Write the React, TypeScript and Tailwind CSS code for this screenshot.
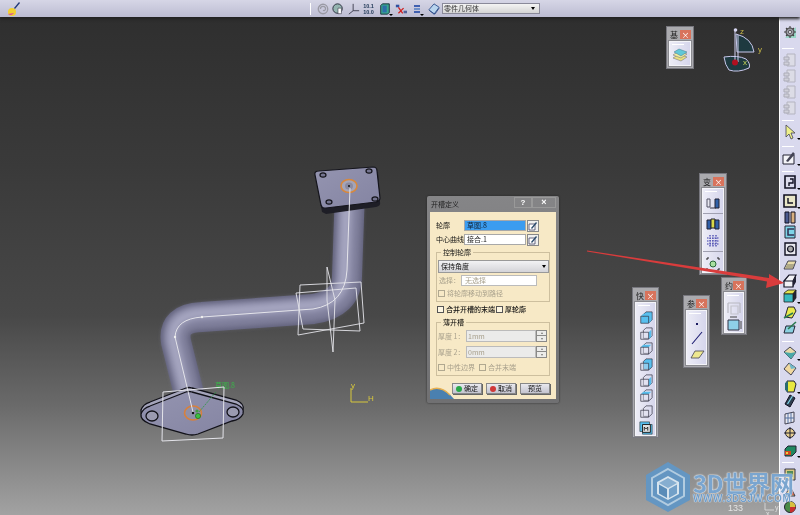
import type { ReactNode } from "react"

const cjk = "font-['Noto_Sans_CJK_SC','Liberation_Sans',sans-serif]"

function Glyph({ children, drop }: { children: ReactNode; drop?: boolean }) {
  return (
    <div className="relative h-4 w-4 shrink-0">
      <svg viewBox="0 0 16 16" className="h-4 w-4">
        {children}
      </svg>
      {drop && <div className="absolute -right-[3px] bottom-0 h-0 w-0 border-x-[2px] border-t-[2px] border-x-transparent border-t-black" />}
    </div>
  )
}

function Sep() {
  return <div className="my-[3px] ml-0.5 h-px w-3 self-start bg-white" />
}

function Faded() {
  return (
    <Glyph>
      <path d="M5 2h8v12H5z" fill="#dcdce6" stroke="#b4b4c0" />
      <path d="M2 5h5v3H2zM2 10h5v3H2z" fill="#d0d0da" stroke="#acacb8" />
    </Glyph>
  )
}

function Box({ top, side, front, drop }: { top: string; side: string; front: string; drop?: boolean }) {
  return (
    <Glyph drop={drop}>
      <path d="M2 5l4-3h8l-3 4H2z" fill={top} stroke="#222" strokeWidth="0.8" />
      <path d="M11 6l3-4v8l-3 4z" fill={side} stroke="#222" strokeWidth="0.8" />
      <path d="M2 6h9v8H2z" fill={front} stroke="#222" strokeWidth="0.8" />
    </Glyph>
  )
}

function RightToolbar() {
  return (
    <aside className="flex w-[21px] shrink-0 flex-col items-center border-l border-white bg-[#d9d9ee] pt-[7px]">
      <Glyph>
        <path d="M3 14L14 3v11z" fill="#9ad8c8" />
        <circle cx="8" cy="8" r="4" fill="#9a9aa4" stroke="#444" strokeWidth="1.1" />
        <circle cx="8" cy="8" r="1.6" fill="#e6e6ee" stroke="#444" strokeWidth="0.8" />
        <path d="M8 2v2M8 12v2M2 8h2M12 8h2M4 4l1.500 1.500M10.500 10.500L12 12M12 4l-1.500 1.500M4 12l1.500-1.500" stroke="#444" strokeWidth="1.1" />
      </Glyph>
      <div className="h-[5px]" />
      <Sep />
      <Faded />
      <Faded />
      <Faded />
      <Faded />
      <div className="h-px" />
      <Sep />
      <Glyph drop>
        <path d="M4 1l9 8H9l2 5-2 1-2-5-3 3z" fill="#eef08a" stroke="#445" strokeWidth="0.8" />
      </Glyph>
      <div className="h-[3px]" />
      <Sep />
      <Glyph drop>
        <path d="M1 5h11v9H1z" fill="#f4f4f8" stroke="#223" />
        <path d="M4 11l7-9 2 2-7 8z" fill="#445" />
      </Glyph>
      <div className="h-[2px]" />
      <Sep />
      <Glyph drop>
        <path d="M3 2h10v12H3z" fill="#dcdcec" stroke="#112" strokeWidth="1.6" />
        <path d="M8 5h3v4H7v3" fill="none" stroke="#112" strokeWidth="1.4" />
      </Glyph>
      <div className="h-[3px]" />
      <Glyph drop>
        <path d="M2 2h12v12H2z" fill="#e8e6c8" stroke="#112" strokeWidth="1.6" />
        <path d="M6 5v5h5" fill="none" stroke="#112" strokeWidth="1.4" />
      </Glyph>
      <Glyph>
        <path d="M3 3h4v11H3z" fill="#4a5a90" stroke="#112" />
        <path d="M9 3h4v11H9z" fill="#d8b080" stroke="#112" />
      </Glyph>
      <div className="-mt-px" />
      <Glyph>
        <path d="M3 2h10v12H3z" fill="#7ed4e8" stroke="#223" />
        <path d="M12 5H6v6h6" fill="none" stroke="#335" strokeWidth="1.6" />
      </Glyph>
      <div className="h-px" />
      <Glyph>
        <path d="M3 2h11v12H3z" fill="#e8e8ee" stroke="#112" strokeWidth="1.4" />
        <circle cx="8.500" cy="8" r="3" fill="#aaa" stroke="#112" strokeWidth="1.2" />
      </Glyph>
      <Glyph>
        <path d="M2 12l4-8h8l-3 8z" fill="#e8dca8" stroke="#445" />
        <path d="M5 8h7M4 10h7" stroke="#776" />
      </Glyph>
      <Glyph>
        <path d="M2 8l5-6h7l-3 6zM2 8h9v6H2z" fill="#f2f2f6" stroke="#112" strokeWidth="1.2" />
        <path d="M11 8l3-6v7l-3 5z" fill="#223" />
      </Glyph>
      <div className="-mt-px" />
      <Box top="#e2e24c" side="#223" front="#38b8c0" drop />
      <Glyph>
        <path d="M3 13l3-10h6l2 4-4 7z" fill="#e8e84c" stroke="#223" />
        <path d="M2 14l9-5" stroke="#2a7a50" strokeWidth="1.6" />
      </Glyph>
      <Glyph>
        <path d="M2 13l2-7h9l-2 7z" fill="#8ad0e0" stroke="#223" />
        <path d="M6 9l8-7" stroke="#2a7a50" strokeWidth="1.6" />
      </Glyph>
      <div className="h-[2px]" />
      <Sep />
      <Glyph drop>
        <path d="M2 7l6-5 6 5-5 7z" fill="#e8d8a8" stroke="#445" />
        <path d="M2 7l7 1 5-1-5 7z" fill="#4aa8a8" />
      </Glyph>
      <Glyph>
        <path d="M2 8l5-6 7 5-5 7z" fill="#f0d8a0" stroke="#445" />
        <path d="M7 2l7 5-5 1z" fill="#70b8c8" />
      </Glyph>
      <div className="h-px" />
      <Glyph drop>
        <path d="M5 3h7l2 3-2 8H5z" fill="#e8e840" stroke="#223" />
        <path d="M3 5l3-2v11l-3-2z" fill="#2a6a70" />
      </Glyph>
      <div className="-mt-px" />
      <Glyph>
        <path d="M3 11l5-9 5 3-5 9z" fill="#2e3e50" stroke="#112" />
        <path d="M5.500 11l5-8" stroke="#7ed4e8" strokeWidth="1.2" />
      </Glyph>
      <div className="h-px" />
      <Glyph>
        <path d="M3 4l9-2v10l-9 2z" fill="#e8e8f0" stroke="#445" />
        <path d="M6 3v10M9 3v9M3 8h9" stroke="#5570a0" />
      </Glyph>
      <div className="-mt-px" />
      <Glyph>
        <circle cx="8" cy="8" r="4.500" fill="#e8d090" stroke="#223" />
        <path d="M8 2v12M2 8h12" stroke="#223" />
      </Glyph>
      <div className="h-px" />
      <Glyph drop>
        <path d="M3 7l3-3h8v6l-4 4H3z" fill="#208860" stroke="#223" />
        <path d="M3 9h6v4H3z" fill="#d04820" />
        <path d="M4 10h2v2H4z" fill="#e8d040" />
      </Glyph>
      <div className="h-px" />
      <Sep />
      <Glyph>
        <path d="M3 3h10v11H3z" fill="#d8c880" stroke="#334" />
        <path d="M5 5h6v6H5z" fill="#508858" />
      </Glyph>
      <div className="h-px" />
      <Glyph>
        <path d="M3 13L8 3l5 10z" fill="#d8c080" stroke="#334" />
        <path d="M6 12h6l-2-5z" fill="#c84830" />
      </Glyph>
      <Glyph>
        <circle cx="8" cy="8" r="5.500" fill="#4a8a48" stroke="#223" />
        <path d="M8 8V2.500A5.500 5.500 0 0113.500 8z" fill="#d8c040" />
        <path d="M8 8h5.500A5.500 5.500 0 018 13.500z" fill="#c83030" />
      </Glyph>
    </aside>
  )
}

function TopBar() {
  return (
    <header className="relative z-10 flex h-[17px] shrink-0 items-center bg-[linear-gradient(#d6d6e6,#bcbcd2)] shadow-[0_2px_3px_#222]">
      <div className="ml-[5px] w-4">
        <svg viewBox="0 0 16 16" className="h-4 w-4">
          <circle cx="7" cy="11" r="4" fill="#f2d030" />
          <path d="M3 13a4 4 0 006-1z" fill="#e0509a" />
          <path d="M9 7l5-6 1 1-5 6z" fill="#223a78" />
        </svg>
      </div>
      <div className="ml-[289px] h-3 w-px bg-white" />
      <svg viewBox="0 0 14 14" className="ml-[6px] h-3 w-3">
        <circle cx="7" cy="7" r="5.500" fill="none" stroke="#9a9aa4" strokeWidth="1.6" />
        <path d="M4 7a3 3 0 016 0 2 2 0 01-3 1.500" fill="none" stroke="#9a9aa4" strokeWidth="1.4" />
      </svg>
      <svg viewBox="0 0 14 14" className="ml-[3px] h-3 w-3">
        <circle cx="6.500" cy="6.500" r="5.500" fill="#94b4b0" stroke="#223" />
        <path d="M7 6h4v6.500H7z" fill="#fff" stroke="#223" strokeWidth="0.6" />
      </svg>
      <svg viewBox="0 0 14 14" className="ml-[4px] h-3 w-3">
        <path d="M6 1v8M6 9H13M6 9L1 13" fill="none" stroke="#334" />
      </svg>
      <div className="ml-[3px] w-[11px] text-center font-['Liberation_Sans',sans-serif] text-[5.500px] font-bold leading-[6px] text-[#223a58]">
        10.1
        <br />
        10.0
      </div>
      <div className="relative ml-[5px] w-3">
        <svg viewBox="0 0 14 14" className="h-3 w-3">
          <path d="M2 3l2-2h8v10l-2 2H2z" fill="#3aa890" stroke="#123" />
          <path d="M4 3h5v8H4z" fill="#2c6ea8" />
        </svg>
        <div className="absolute -right-[2px] -bottom-px h-0 w-0 border-x-[2px] border-t-[2px] border-x-transparent border-t-black" />
      </div>
      <svg viewBox="0 0 14 14" className="ml-[4px] h-3 w-3">
        <path d="M1 2h4v3H1z" fill="#3050a0" />
        <path d="M4 5l5 7M4 12l6-6" stroke="#d02020" strokeWidth="1.500" />
        <path d="M10 9h4v3h-4z" fill="#506098" />
      </svg>
      <div className="relative ml-[6px] flex w-2 flex-col items-center gap-px">
        <div className="h-[2px] w-[6px] bg-[#4060b0]" />
        <div className="h-[2px] w-[6px] bg-[#7090c8]" />
        <div className="h-[2px] w-[6px] bg-[#4060b0]" />
        <div className="absolute -right-[3px] -bottom-[3px] h-0 w-0 border-x-[2px] border-t-[2px] border-x-transparent border-t-black" />
      </div>
      <svg viewBox="0 0 14 14" className="ml-[7px] h-3 w-3">
        <path d="M1 8l6-7 6 4-6 8z" fill="#b8d4ee" stroke="#2a4a88" />
        <path d="M2 9l6 4 5-7" fill="none" stroke="#2a4a88" />
      </svg>
      <div className={`ml-[2px] flex h-[11px] w-[98px] items-center justify-between border border-[#8a8a9a] bg-[linear-gradient(#f4f4f4,#d4d4d4)] pl-[1px] pr-1 text-[7px] leading-none text-[#333] ${cjk}`}>
        <span>零件几何体</span>
        <div className="h-0 w-0 border-x-[2px] border-t-[3px] border-x-transparent border-t-black" />
      </div>
    </header>
  )
}

function Model() {
  const pipe = "M191 402 L176 342 Q172 318 202 317 L313 309 Q347 304 347 276 L350 190"
  const highlight = "M188 402 L173 342 Q170 315 202 313 L313 305 Q343 301 344 276 L347 190"
  const lobes = "M192 392 L236 404 Q245 408 243 414 Q240 420 232 421 L198 434 Q192 436 186 434 L150 424 Q140 420 141 414 Q143 408 150 406 L186 392 Q189 391 192 392 Z"
  return (
    <svg viewBox="0 0 800 515" className="absolute inset-0 h-[515px] w-[800px]">
      <defs>
        <linearGradient id="fl" x1="0" y1="0" x2="1" y2="1">
          <stop offset="0" stopColor="#9494b0" />
          <stop offset="1" stopColor="#8484a2" />
        </linearGradient>
        <filter id="soft" x="-10%" y="-10%" width="120%" height="120%">
          <feGaussianBlur stdDeviation="2.500" />
        </filter>
      </defs>

      {/* pipe, layered strokes for the tube shading */}
      <g fill="none">
        <path d={pipe} stroke="#62627c" strokeWidth="30" />
        <g filter="url(#soft)">
          <path d={pipe} stroke="#7e7e9a" strokeWidth="25" />
          <path d={highlight} stroke="#9292ae" strokeWidth="16" />
          <path d={highlight} stroke="#a8a8c2" strokeWidth="6" />
        </g>
      </g>

      {/* top flange */}
      <path d="M316 178 L322 212 L326 214 L376 207 Q381 206 380 202 L378 172 Z" fill="#1e1e26" />
      <path d="M315 175 Q314 171 319 171 L373 167 Q377 167 377 171 L380 198 Q380 201 376 202 L326 208 Q322 209 321 205 Z" fill="url(#fl)" stroke="#15151c" strokeWidth="1.2" />
      <g fill="#75758f" stroke="#15151c" strokeWidth="1.2">
        <ellipse cx="323" cy="175" rx="3" ry="2.200" />
        <ellipse cx="369" cy="171" rx="3" ry="2.200" />
        <ellipse cx="329" cy="202" rx="3" ry="2.200" />
        <ellipse cx="375" cy="199" rx="3" ry="2.200" />
      </g>
      <ellipse cx="349" cy="186" rx="8" ry="6.500" fill="#a4a4b8" stroke="#d8883c" strokeWidth="1.600" />
      <ellipse cx="349" cy="186" rx="4" ry="3.500" fill="#8a8aa0" />
      <circle cx="349" cy="186" r="1" fill="#111" />

      {/* bottom flange */}
      <path d={lobes} transform="translate(0 -4)" fill="#a4a4ba" stroke="#111118" strokeWidth="1.300" />
      <path d={lobes} fill="url(#fl)" stroke="#111118" strokeWidth="1.300" />
      <ellipse cx="152" cy="416" rx="6" ry="5" fill="#9a9ab0" stroke="#111118" strokeWidth="1.300" />
      <ellipse cx="233" cy="412" rx="6" ry="5" fill="#9a9ab0" stroke="#111118" strokeWidth="1.300" />
      <ellipse cx="193" cy="413" rx="8.500" ry="7" fill="#9090a8" stroke="#d8803c" strokeWidth="1.600" />
      <circle cx="193" cy="413" r="1.200" fill="#111" />
      <circle cx="198" cy="416" r="2.600" fill="#3cc040" stroke="#186018" strokeWidth="0.600" />
      <circle cx="197" cy="411" r="1.600" fill="#40a040" />
      <path d="M199 412 L216 392" stroke="#2a9a40" strokeWidth="0.800" strokeDasharray="2 1" />
      <text x="215" y="388" fill="#38b848" fontSize="7" fontFamily="'Noto Sans CJK SC', sans-serif">草图.8</text>

      {/* centre curve and section frames */}
      <g fill="none" stroke="#e4e4ea" strokeWidth="0.900">
        <path d="M193 412 L175 337 Q176 319 202 317 L313 309 Q345 304 347 270 L350 188" strokeWidth="1" />
        <path d="M163 392 L224 387 L223 438 L162 441 Z" strokeWidth="1" />
        <path d="M300 285 L361 282 L364 323 L298 335 Z" />
        <path d="M296 293 L356 288 L360 331 L303 329 Z" />
        <path d="M327 267 L335 300 L333 352 L327 300 Z" />
      </g>
      <circle cx="175" cy="337" r="1.200" fill="#eee" />
      <circle cx="202" cy="317" r="1.200" fill="#eee" />

      {/* axis in the middle of the view */}
      <path d="M351 388 V402 H368" stroke="#d8c83c" strokeWidth="1" fill="none" />
      <text x="351" y="388" fill="#d8c83c" fontSize="8" fontFamily="'Liberation Sans', sans-serif">y</text>
      <text x="368" y="401" fill="#d8c83c" fontSize="8" fontFamily="'Liberation Sans', sans-serif">H</text>

      {/* compass */}
      <path d="M736 34 Q752 38 754 52 L737 52 Z" fill="#1e3a40" stroke="#c8c8ec" />
      <path d="M724 57 Q738 55 746 59 Q751 64 749 68 Q738 73 729 70 Q725 65 724 57 Z" fill="#1e3a40" stroke="#c8c8ec" />
      <path d="M735 31 V62 M738 35 V62" stroke="#d0d0f0" strokeWidth="1" />
      <circle cx="735.500" cy="30" r="1.800" fill="#d8d8f4" />
      <circle cx="735" cy="62.500" r="3" fill="#b01020" />
      <text x="740" y="34" fill="#c8b848" fontSize="8" fontFamily="'Liberation Sans', sans-serif">z</text>
      <text x="758" y="52" fill="#c8b848" fontSize="8" fontFamily="'Liberation Sans', sans-serif">y</text>
      <text x="743" y="65" fill="#c8d858" fontSize="8" fontFamily="'Liberation Sans', sans-serif">x</text>

      {/* small axis at the bottom of the view */}
      <path d="M765 503 V510 H774" stroke="#e0e0e0" strokeWidth="0.800" fill="none" />
      <text x="775" y="510" fill="#e0e0e0" fontSize="7" fontFamily="'Liberation Sans', sans-serif">y</text>
      <text x="766" y="516" fill="#e0e0e0" fontSize="7" fontFamily="'Liberation Sans', sans-serif">x</text>
    </svg>
  )
}

function RedArrow() {
  return (
    <svg viewBox="0 0 800 515" className="absolute inset-0 h-[515px] w-[800px]">
      <path d="M587 250.500 L769 278 L769 274 L784 283 L766 288 L767 281.500 L587 251.500 Z" fill="#d93c3c" />
    </svg>
  )
}

function ToolWindow({ title, className, children }: { title: string; className: string; children: ReactNode }) {
  return (
    <div className={`absolute flex flex-col border border-[#77777e] bg-[#aaaaae] p-[2px] ${className}`}>
      <div className={`flex h-[11px] shrink-0 items-center justify-between pl-[1px] text-[8px] leading-none text-[#222] ${cjk}`}>
        <span className="whitespace-nowrap">{title}</span>
        <div className="flex h-[9px] w-[11px] shrink-0 items-center justify-center bg-[#d8735c] text-[8px] leading-none text-white">×</div>
      </div>
      <div className="mt-[1px] flex flex-1 flex-col items-center border border-[#f4f4f8] bg-[linear-gradient(90deg,#ececf6,#d6d6ec)] pt-[2px] shadow-[0_0_0_1px_#8a8a90]">
        <div className="ml-0.5 h-px w-3 self-start bg-white" />
        {children}
      </div>
    </div>
  )
}

function WireCube({ face }: { face: "top" | "front" | "side" | "back" | "all" | "none" }) {
  const fill = "#58bfee"
  return (
    <svg viewBox="0 0 16 16" className="h-[14px] w-[14px] shrink-0">
      <path d="M5 4l3-3h7v9l-3 3H5z" fill={face === "back" || face === "all" ? fill : "none"} stroke="#334" strokeWidth="0.800" />
      {(face === "top" || face === "all") && <path d="M2 6l3-3h9l-3 3z" fill={fill} />}
      {(face === "side" || face === "all") && <path d="M11 6l3-3v8l-3 3z" fill={fill} />}
      <path d="M2 6h9v8H2z" fill={face === "front" || face === "all" ? fill : "#e4e4f0"} fillOpacity={face === "front" || face === "all" ? 1 : 0.4} stroke="#334" strokeWidth="0.800" />
    </svg>
  )
}

function ToolWindows() {
  return (
    <>
      <ToolWindow title="基" className="left-[666px] top-[26px] h-[43px] w-[28px]">
        <svg viewBox="0 0 16 16" className="mt-[2px] h-4 w-4">
          <path d="M1 11l6-4 8 3-6 4z" fill="#e8e080" stroke="#667" strokeWidth="0.500" />
          <path d="M1 8l6-4 8 3-6 4z" fill="#f0eca0" stroke="#667" strokeWidth="0.500" />
          <path d="M2 5l5-3 8 3-6 4z" fill="#60c8d8" stroke="#478" strokeWidth="0.500" />
        </svg>
      </ToolWindow>

      <ToolWindow title="变" className="left-[699px] top-[173px] h-[102px] w-[28px]">
        <svg viewBox="0 0 16 16" className="mt-[3px] h-4 w-4">
          <path d="M2 4h3v8H2z" fill="#e8e8f0" stroke="#556" />
          <path d="M10 4h4v9h-4z" fill="#3060a8" stroke="#223" />
          <path d="M5 13h6" stroke="#334" />
        </svg>
        <div className="my-[2px] h-px w-full bg-[#a0a0b0]" />
        <svg viewBox="0 0 16 16" className="h-4 w-4">
          <path d="M2 4h4v9H2z" fill="#3060a8" stroke="#223" />
          <path d="M6 3h4v9H6z" fill="#d8d848" stroke="#223" />
          <path d="M10 4h4v9h-4z" fill="#3060a8" stroke="#223" />
        </svg>
        <div className="h-px" />
        <svg viewBox="0 0 16 16" className="h-4 w-4">
          <path d="M5 2v12M8 2v12M11 2v12M2 5h12M2 8h12M2 11h12" stroke="#3838a8" strokeWidth="1.200" strokeDasharray="1.500 1" />
        </svg>
        <div className="my-[2px] h-px w-full bg-[#a0a0b0]" />
        <svg viewBox="0 0 16 16" className="mt-[2px] h-4 w-4">
          <circle cx="8" cy="8" r="3" fill="#a8e0a0" stroke="#286838" />
          <path d="M2 2h2M2 2v2M14 2h-2M14 2v2M2 14h2M2 14v-2M14 14h-2M14 14v-2" stroke="#222" />
        </svg>
      </ToolWindow>

      <ToolWindow title="快" className="left-[632px] top-[287px] h-[151px] w-[27px]">
        <div className="mt-[5px] flex flex-col gap-[1.700px]">
          <WireCube face="all" />
          <WireCube face="side" />
          <WireCube face="top" />
          <WireCube face="back" />
          <WireCube face="side" />
          <WireCube face="top" />
          <WireCube face="none" />
          <svg viewBox="0 0 16 16" className="h-[14px] w-[14px]">
            <path d="M1 1h11v3h3v11H4v-3H1z" fill="#58bfee" stroke="#233" strokeWidth="0.700" />
            <path d="M4 4h9v9H4z" fill="#dfe0e0" stroke="#111" />
            <path d="M6 11V7l2 2 2-2v4" fill="none" stroke="#111" />
          </svg>
        </div>
      </ToolWindow>

      <ToolWindow title="参" className="left-[683px] top-[295px] h-[73px] w-[27px]">
        <div className="flex flex-col items-center">
          <div className="mt-[9px] h-[2px] w-[2px] bg-[#1a1a60]" />
          <svg viewBox="0 0 12 14" className="mt-[6px] h-3.5 w-3">
            <path d="M1 13L11 1" stroke="#1a1a70" strokeWidth="1.100" />
          </svg>
          <svg viewBox="0 0 16 10" className="mt-[4px] h-2.5 w-4">
            <path d="M2 9L6 2h9l-5 7z" fill="#eee890" stroke="#445" strokeWidth="0.800" />
          </svg>
        </div>
      </ToolWindow>

      <ToolWindow title="约" className="left-[721px] top-[277px] h-[58px] w-[26px]">
        <svg viewBox="0 0 16 16" className="mt-[4px] h-4 w-4">
          <path d="M2 3h12M2 3v10M14 3v10" fill="none" stroke="#b8b8c0" strokeWidth="1.200" />
          <path d="M5 6h7v8H5z" fill="none" stroke="#c4c4cc" strokeWidth="1.200" />
        </svg>
        <svg viewBox="0 0 16 16" className="h-4 w-4">
          <path d="M2 4h11v10H2z" fill="#8ed0e8" stroke="#334" />
          <path d="M4 1h7M15 5v8" stroke="#444" />
        </svg>
      </ToolWindow>
    </>
  )
}

function Check({ label, disabled, className = "" }: { label: string; disabled?: boolean; className?: string }) {
  return (
    <div className={`flex items-center gap-[2px] whitespace-nowrap ${disabled ? "text-[#a8a08c]" : "text-[#111]"} ${className}`}>
      <div className={`h-[7px] w-[7px] shrink-0 border ${disabled ? "border-[#b0a890]" : "border-[#555] bg-[#fdf6e2]"}`} />
      <span>{label}</span>
    </div>
  )
}

function PickButton() {
  return (
    <div className="ml-px flex h-[12px] w-[12px] shrink-0 items-center justify-center border border-[#888] bg-[#f0f0ee]">
      <svg viewBox="0 0 10 10" className="h-2.5 w-2.5">
        <path d="M1 3h6v6H1z" fill="#fff" stroke="#446" strokeWidth="0.800" />
        <path d="M3 7l5-6 1 1-5 6z" fill="#2a4a6a" />
      </svg>
    </div>
  )
}

function Group({ title, className, children }: { title: string; className: string; children: ReactNode }) {
  return (
    <div className={`relative border border-[#cdbf9e] ${className}`}>
      <span className="absolute -top-[4px] left-[4px] bg-[#f7e9c6] px-[2px]">{title}</span>
      {children}
    </div>
  )
}

function Spinner() {
  return (
    <div className="flex h-[12px] w-[11px] shrink-0 flex-col border border-[#8a8a88] bg-[#ececea]">
      <div className="flex h-1/2 items-center justify-center border-b border-[#8a8a88]">
        <div className="h-0 w-0 border-x-[1.500px] border-b-[2px] border-x-transparent border-b-[#777]" />
      </div>
      <div className="flex h-1/2 items-center justify-center">
        <div className="h-0 w-0 border-x-[1.500px] border-t-[2px] border-x-transparent border-t-[#777]" />
      </div>
    </div>
  )
}

function DialogButton({ label, dot }: { label: string; dot?: string }) {
  return (
    <div className="flex h-[11px] w-[30px] items-center justify-center gap-[2px] border border-[#888] bg-[linear-gradient(#e9e9ee,#c4c4d0)] text-[#111] shadow-[1px_1px_0_#666]">
      {dot && <div className={`h-[6px] w-[6px] rounded-full ${dot}`} />}
      <span>{label}</span>
    </div>
  )
}

function SlotDialog() {
  return (
    <div className={`absolute left-[427px] top-[196px] flex h-[207px] w-[132px] flex-col rounded-[2px] bg-[linear-gradient(#858587,#707072)] px-[3px] pb-[4px] text-[7px] leading-none shadow-[0_0_2px_#222] ${cjk}`}>
      <div className="flex h-[16px] shrink-0 items-center justify-between">
        <span className="pl-[1px] text-[#222]">开槽定义</span>
        <div className="mb-[3px] flex">
          <div className="flex h-[11px] w-[18px] items-center justify-center border border-[#999] font-['Liberation_Sans',sans-serif] text-[8px] font-bold text-white">?</div>
          <div className="flex h-[11px] w-[24px] items-center justify-center border border-[#999] font-['Liberation_Sans',sans-serif] text-[9px] font-bold text-white">×</div>
        </div>
      </div>

      <div className="relative flex-1 overflow-hidden bg-[#f7e9c6] pl-[6px] pr-[6px] pt-[8px]">
        <div className="flex h-[11px] items-center">
          <span className="w-[28px] shrink-0 text-[#111]">轮廓</span>
          <div className="h-[11px] w-[62px] border border-[#a8a8a8] bg-[#3b9cf0] pl-[2px] leading-[9px] text-[#123]">草图.8</div>
          <PickButton />
        </div>
        <div className="mt-[3px] flex h-[11px] items-center">
          <span className="w-[28px] shrink-0 whitespace-nowrap text-[#111]">中心曲线</span>
          <div className="h-[11px] w-[62px] border border-[#a8a8a8] bg-white pl-[2px] leading-[9px] text-[#222]">接合.1</div>
          <PickButton />
        </div>

        <Group title="控制轮廓" className="mt-[7px] h-[50px] text-[#111]">
          <div className="ml-px mt-[7px] flex h-[13px] items-center justify-between border border-[#999] bg-[linear-gradient(#f2f2f4,#d4d4d8)] px-[2px]">
            <span>保持角度</span>
            <div className="h-0 w-0 border-x-[2.500px] border-t-[3px] border-x-transparent border-t-black" />
          </div>
          <div className="mt-[2px] flex items-center pl-[2px] text-[#a8a08c]">
            <span className="w-[22px] shrink-0 whitespace-nowrap">选择：</span>
            <div className="h-[11px] w-[76px] border border-[#bbb] bg-white pl-[3px] leading-[9px]">无选择</div>
          </div>
          <Check label="将轮廓移动到路径" disabled className="mt-[4px] pl-[1px]" />
        </Group>

        <div className="mt-px flex h-[12px] items-center font-medium">
          <Check label="合并开槽的末端" className="w-[60px] pl-px" />
          <Check label="厚轮廓" />
        </div>

        <Group title="薄开槽" className="mt-[7px] h-[54px]">
          <div className="mt-[7px] flex items-center pl-px text-[#a8a08c]">
            <span className="w-[28px] shrink-0 whitespace-nowrap">厚度 1：</span>
            <div className="h-[12px] w-[70px] border border-[#bbb] bg-[#ebebea] pl-px leading-[10px]">1mm</div>
            <Spinner />
          </div>
          <div className="mt-[4px] flex items-center pl-px text-[#a8a08c]">
            <span className="w-[28px] shrink-0 whitespace-nowrap">厚度 2：</span>
            <div className="h-[12px] w-[70px] border border-[#bbb] bg-[#ebebea] pl-px leading-[10px]">0mm</div>
            <Spinner />
          </div>
          <div className="mt-[6px] flex gap-[4px] pl-px">
            <Check label="中性边界" disabled />
            <Check label="合并末端" disabled />
          </div>
        </Group>

        <div className="mt-[7px] flex gap-[4px] pl-[16px]">
          <DialogButton label="确定" dot="bg-[#28a848]" />
          <DialogButton label="取消" dot="bg-[#d03838]" />
          <DialogButton label="预览" />
        </div>

        {/* swoosh in the dialog's corner */}
        <svg viewBox="0 0 24 16" className="absolute bottom-0 left-0 h-4 w-6">
          <path d="M0 16V7Q12 1 24 16Z" fill="#4a80b0" />
          <path d="M0 7Q10 2 20 12" fill="none" stroke="#e8b050" strokeWidth="1.500" />
        </svg>
      </div>
    </div>
  )
}

function Watermark() {
  return (
    <div className="absolute left-[645px] top-[460px] flex h-[53px] w-[155px] items-center">
      <svg viewBox="0 0 46 52" className="h-[52px] w-[46px] shrink-0">
        <path d="M23 1L45 14V39L23 51L1 39V14Z" fill="#6496c2" />
        <path d="M23 8L39 17V35L23 44L7 35V17Z" fill="none" stroke="#b2cce0" strokeWidth="2" />
        <path d="M23 15L34 21V33L23 39L12 33V21Z" fill="#d6e4ee" />
        <path d="M23 17L32 22L23 27L14 22Z" fill="#86aed0" />
        <path d="M14 23.500L22 28V37L14 32.500Z" fill="#5a8cb8" />
        <path d="M32 23.500L24 28V37L32 32.500Z" fill="#72a0c8" />
      </svg>
      <div className="ml-[2px] flex flex-col">
        <span className={`text-[24px] font-bold leading-[25px] tracking-tight text-[#7aa5cf] [text-shadow:0_0_1px_#fff,0_0_2px_#fff] ${cjk}`}>3D世界网</span>
        <span className="font-['Liberation_Sans',sans-serif] text-[10px] font-bold leading-[8px] tracking-[0.600px] text-[#6f9dca] [text-shadow:0_0_1px_#fff,0_0_1px_#fff]">WWW.3DSJW.COM</span>
      </div>
    </div>
  )
}

export default function App() {
  return (
    <div className="relative flex h-[515px] w-[800px] flex-col overflow-hidden bg-[#333] blur-[0.4px]">
      <TopBar />
      <div className="flex min-h-0 flex-1">
        <main className="flex-1 bg-[linear-gradient(#2f2f2f_0%,#3a3a3a_30%,#484848_60%,#6a6a6a_78%,#a2a2a2_100%)]" />
        <RightToolbar />
      </div>
      <Model />
      <ToolWindows />
      <SlotDialog />
      <RedArrow />
      <Watermark />
      <span className="absolute left-[728px] top-[504px] font-['Liberation_Sans',sans-serif] text-[9px] leading-none text-[#e4e4e4]">133</span>
    </div>
  )
}
